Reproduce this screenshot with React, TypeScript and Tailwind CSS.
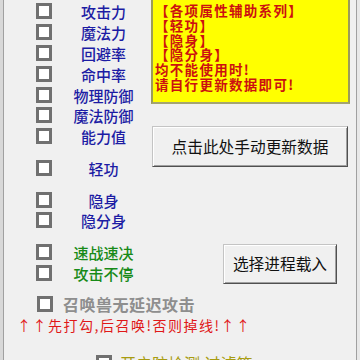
import React from 'react';

const FONT = { fontFamily: '"Noto Sans CJK SC", "Noto Sans", sans-serif' };

type Row = { label: string; mt: string; tone: 'blue' | 'green' };

const rows: Row[] = [
    { label: '攻击力', mt: 'mt-[3px]', tone: 'blue' },
    { label: '魔法力', mt: 'mt-[5px]', tone: 'blue' },
    { label: '回避率', mt: 'mt-[5px]', tone: 'blue' },
    { label: '命中率', mt: 'mt-[5px]', tone: 'blue' },
    { label: '物理防御', mt: 'mt-[5px]', tone: 'blue' },
    { label: '魔法防御', mt: 'mt-[4px]', tone: 'blue' },
    { label: '能力值', mt: 'mt-[5px]', tone: 'blue' },
    { label: '轻功', mt: 'mt-[16px]', tone: 'blue' },
    { label: '隐身', mt: 'mt-[16px]', tone: 'blue' },
    { label: '隐分身', mt: 'mt-[4px]', tone: 'blue' },
    { label: '速战速决', mt: 'mt-[16px]', tone: 'green' },
    { label: '攻击不停', mt: 'mt-[5px]', tone: 'green' },
];

function Box() {
    return <span className="block h-[16px] w-[16px] shrink-0 border-[3px] border-[#707070] bg-white" />;
}

function ClassicButton({ children, className }: { children: React.ReactNode; className: string }) {
    return (
        <button
            className={
                'flex items-center justify-center border border-t-[#c4c4c4] border-l-[#c4c4c4] border-b-[#505050] border-r-[#505050] bg-[#f0f0f0] text-[#111] shadow-[inset_1px_1px_#ffffff,inset_-1px_-1px_#a0a0a0] ' +
                className
            }
        >
            {children}
        </button>
    );
}

export default function App() {
    return (
        <div className="flex h-[360px] w-[360px] overflow-hidden bg-[#e8e8e8]" style={FONT}>
            <div className="h-full w-[3px] bg-[#d8d8d8]" />
            <div className="h-full w-[354px] border-x border-[#a0a0a0] bg-[#f0f0f0]">
                <div className="flex">
                    {/* checkbox column */}
                    <div className="flex w-[147px] flex-col">
                        {rows.map((r) => (
                            <div key={r.label} className={'flex h-[16px] items-center ' + r.mt}>
                                <span className="ml-[32px]">
                                    <Box />
                                </span>
                                <span
                                    className={
                                        'w-[103px] shrink-0 whitespace-nowrap text-center text-[15px] font-medium leading-none ' +
                                        (r.tone === 'blue' ? 'text-[#1c1ca4]' : 'text-[#178a17]')
                                    }
                                >
                                    {r.label}
                                </span>
                            </div>
                        ))}
                        <div className="mt-[15px] flex h-[16px] items-center">
                            <span className="ml-[33px]">
                                <Box />
                            </span>
                            <span className="ml-[10px] shrink-0 whitespace-nowrap text-[16px] font-bold leading-none tracking-[0.5px] text-[#8e8e8e]">
                                召唤兽无延迟攻击
                            </span>
                        </div>
                    </div>

                    {/* right column */}
                    <div className="flex w-[199px] flex-col">
                        <div className="h-[104px] border-x-2 border-b-2 border-x-[#9c9c58] border-b-[#a4a470] bg-[#ffff00] pl-[2px] pt-[3px] text-[13.5px] font-semibold leading-[14.8px] tracking-[1.3px] text-[#cc1010]">
                            <div>【各项属性辅助系列】</div>
                            <div>【轻功】</div>
                            <div>【隐身】</div>
                            <div>【隐分身】</div>
                            <div>均不能使用时!</div>
                            <div>请自行更新数据即可!</div>
                        </div>
                        <ClassicButton className="ml-[1px] mt-[22px] h-[41px] w-[196px] text-[15.7px]">
                            点击此处手动更新数据
                        </ClassicButton>
                        <ClassicButton className="ml-[72px] mt-[77px] h-[40px] w-[114px] text-[15.7px]">
                            选择进程载入
                        </ClassicButton>
                    </div>
                </div>

                <div className="ml-[13px] mt-[5px] whitespace-nowrap text-[14px] leading-[16px] tracking-[1.5px] text-[#e01818]">
                    ↑↑先打勾,后召唤!否则掉线!↑↑
                </div>

                <div className="mt-[22px] flex h-[16px] items-center">
                    <span className="ml-[92px]">
                        <Box />
                    </span>
                    <span className="ml-[8px] whitespace-nowrap text-[16px] leading-none text-[#a89c10]">
                        开启防检测,过滤等
                    </span>
                </div>
            </div>
        </div>
    );
}
